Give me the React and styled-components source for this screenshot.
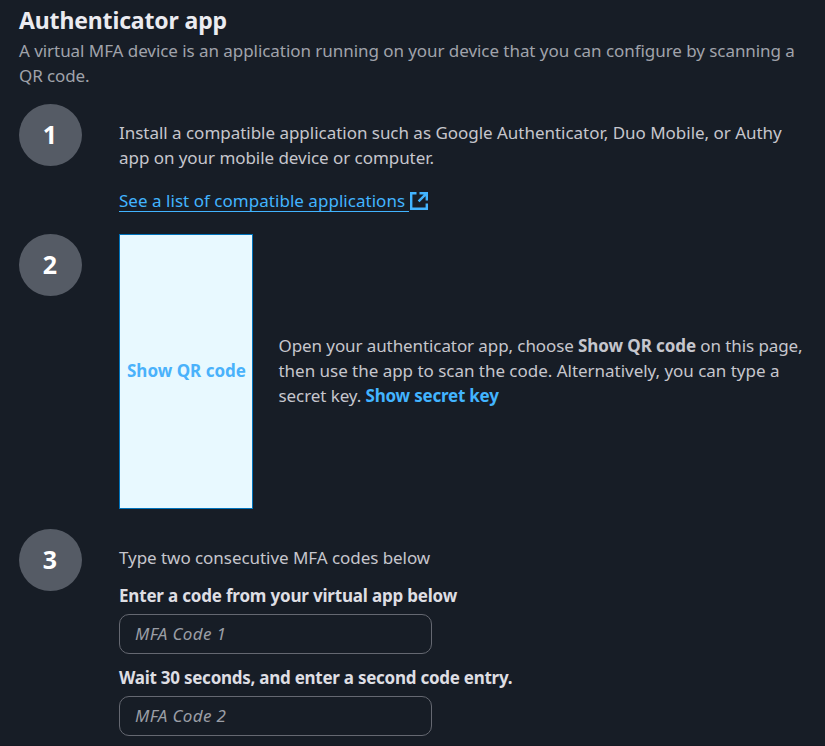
import React from 'react';
import styled, { createGlobalStyle } from 'styled-components';

const GlobalStyle = createGlobalStyle`
  *, *::before, *::after { box-sizing: border-box; }
  html, body { margin: 0; padding: 0; background: #171d26; overflow: hidden; }
`;

const Page = styled.main`
  width: 825px;
  height: 746px;
  padding: 4px 0 0 19px;
  overflow: hidden;
  background: #171d26;
  border-bottom: 1px solid #161923;
  color: #c6c6cd;
  font-family: "Noto Sans", "Open Sans", sans-serif;
  font-size: 17px;
  line-height: 25px;
`;

const Title = styled.h1`
  margin: 0 0 2px;
  font-size: 23px;
  line-height: 32px;
  font-weight: 700;
  letter-spacing: -0.15px;
  color: #ebebf0;
`;

const Line = styled.span`
  display: block;
  white-space: nowrap;
  letter-spacing: ${(p) => p.$tracking || 0}px;
`;

const Description = styled.p`
  margin: 0 0 16px;
  color: #a0a3ab;
`;

const Steps = styled.ol`
  display: grid;
  grid-template-rows: 130px 295px auto;
  margin: 0;
  padding: 0;
  list-style: none;
`;

const Step = styled.li`
  display: grid;
  grid-template-columns: 63px 1fr;
  column-gap: 37px;
  align-items: start;
`;

const StepNumber = styled.div`
  display: flex;
  align-items: center;
  justify-content: center;
  width: 63px;
  height: 62px;
  padding: 0 1px 2px 0;
  border-radius: 50%;
  background: #555b65;
  color: #fff;
  font-size: 25px;
  font-weight: 700;
`;

const StepBody = styled.div`
  padding-top: 16px;
`;

const Paragraph = styled.p`
  margin: 0;
`;

const ExternalLink = styled.a`
  display: inline-flex;
  height: 25px;
  margin-top: 18px;
  color: #42b4ff;
  text-decoration: none;
  white-space: nowrap;
`;

const LinkText = styled.span`
  width: 290px;
  height: 24px;
  border-bottom: 1px solid #42b4ff;
  letter-spacing: 0.03px;
`;

const LinkIcon = styled.svg`
  width: 20px;
  height: 20px;
  margin: 3px 0 0;
`;

const QrRow = styled.div`
  display: flex;
  align-items: center;
  gap: 25.5px;
`;

const QrInstructions = styled(Paragraph)`
  padding-bottom: 2px;
`;

const QrButton = styled.button`
  width: 134px;
  height: 275px;
  padding: 0 0 2px 1px;
  border: 1px solid #0073bb;
  background: #e8f9ff;
  color: #4ab2fb;
  font: inherit;
  font-weight: 700;
  white-space: nowrap;
`;

const Strong = styled.b`
  font-weight: 700;
`;

const SecretButton = styled.button`
  padding: 0;
  border: 0;
  background: none;
  color: #42b4ff;
  font: inherit;
  font-weight: 700;
  letter-spacing: -0.22px;
`;

const Fields = styled.div`
  display: grid;
  gap: 11px;
  margin-top: 13px;
`;

const Field = styled.label`
  display: grid;
  gap: 6px;
  color: #dedee3;
  font-weight: 700;
`;

const Input = styled.input`
  width: 313px;
  height: 40px;
  padding: 0 15px 2px;
  border: 1px solid #656871;
  border-radius: 10px;
  outline: 0;
  background: transparent;
  color: #c6c6cd;
  font: inherit;
  font-weight: 400;
  letter-spacing: 0.35px;

  &::placeholder {
    color: #9a9da5;
    font-style: italic;
    opacity: 1;
  }
`;

function ExternalIcon() {
  return (
    <LinkIcon viewBox="0 0 20 20" fill="none" stroke="currentColor" strokeWidth="2.4" aria-hidden="true">
      <path d="M7.5 2.2H2.2V17.8H17.8V12.5" />
      <path d="M10.5 2.2H17.8V9.5M17.3 2.7L9.6 10.4" />
    </LinkIcon>
  );
}

const fields = [
  { label: 'Enter a code from your virtual app below', tracking: -0.19, placeholder: 'MFA Code 1' },
  { label: 'Wait 30 seconds, and enter a second code entry.', tracking: -0.26, placeholder: 'MFA Code 2' },
];

export default function App() {
  return (
    <>
      <GlobalStyle />
      <Page>
        <Title>Authenticator app</Title>
        <Description>
          <Line $tracking={-0.055}>
            A virtual MFA device is an application running on your device that you can configure by scanning a
          </Line>
          <Line $tracking={-0.1}>QR code.</Line>
        </Description>
        <Steps>
          <Step>
            <StepNumber>1</StepNumber>
            <StepBody>
              <Paragraph>
                <Line $tracking={-0.025}>
                  Install a compatible application such as Google Authenticator, Duo Mobile, or Authy
                </Line>
                <Line $tracking={-0.05}>app on your mobile device or computer.</Line>
              </Paragraph>
              <ExternalLink href="#">
                <LinkText>See a list of compatible applications</LinkText>
                <ExternalIcon />
              </ExternalLink>
            </StepBody>
          </Step>
          <Step>
            <StepNumber>2</StepNumber>
            <QrRow>
              <QrButton type="button">Show QR code</QrButton>
              <QrInstructions>
                <Line $tracking={-0.09}>
                  Open your authenticator app, choose <Strong>Show QR code</Strong> on this page,
                </Line>
                <Line $tracking={-0.025}>then use the app to scan the code. Alternatively, you can type a</Line>
                <Line $tracking={-0.08}>
                  secret key. <SecretButton type="button">Show secret key</SecretButton>
                </Line>
              </QrInstructions>
            </QrRow>
          </Step>
          <Step>
            <StepNumber>3</StepNumber>
            <StepBody>
              <Paragraph>
                <Line $tracking={-0.05}>Type two consecutive MFA codes below</Line>
              </Paragraph>
              <Fields>
                {fields.map((f) => (
                  <Field key={f.label}>
                    <Line $tracking={f.tracking}>{f.label}</Line>
                    <Input placeholder={f.placeholder} />
                  </Field>
                ))}
              </Fields>
            </StepBody>
          </Step>
        </Steps>
      </Page>
    </>
  );
}
